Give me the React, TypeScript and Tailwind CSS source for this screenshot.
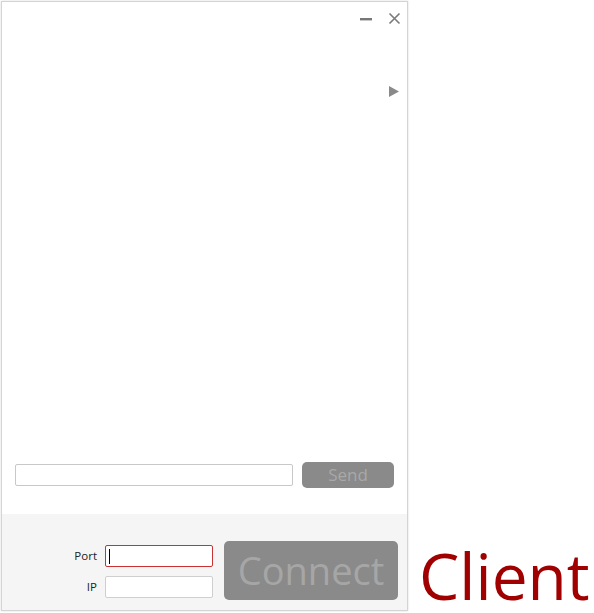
export default function App() {
  return (
    <div className="w-[594px] h-[613px] bg-white relative font-['Open_Sans',sans-serif]">
      {/* Client window */}
      <div className="absolute left-[1px] top-[1px] w-[407px] h-[610px] border border-[#d4d4d4] shadow-[0_0_2px_rgba(0,0,0,0.15)] flex flex-col bg-white">
        {/* Title bar */}
        <div className="flex justify-end items-center h-[32px] pr-[6px] gap-[16px]">
          <svg width="12" height="12" viewBox="0 0 12 12" className="mt-[1px]">
            <rect x="0" y="5" width="12" height="2.4" fill="#777" />
          </svg>
          <svg width="13" height="13" viewBox="0 0 13 13">
            <path d="M1.5 1.5 L11.5 11.5 M11.5 1.5 L1.5 11.5" stroke="#7a7a7a" strokeWidth="1.6" />
          </svg>
        </div>
        {/* Side toggle */}
        <div className="flex justify-end pr-[8px] mt-[52px]">
          <svg width="10" height="11" viewBox="0 0 10 11">
            <path d="M0 0 L10 5.5 L0 11 Z" fill="#8a8a8a" />
          </svg>
        </div>
        <div className="flex-1" />
        {/* Message row */}
        <div className="flex items-center px-[13px] gap-[9px] mb-[26px]">
          <input className="w-[278px] h-[22px] border border-[#c8c8c8] rounded-[2px] outline-none" />
          <button className="w-[92px] h-[26px] rounded-[5px] bg-[#8a8a8a] text-[#a8a8a8] text-[17px] leading-none pb-[1px]">
            Send
          </button>
        </div>
        {/* Connection panel */}
        <div className="h-[96px] bg-[#f5f5f5] flex items-end pb-[10px] pl-[19px]">
          <div className="flex flex-col gap-[9px] mb-[2px]">
            <div className="flex items-center">
              <span className="w-[84px] text-right pr-[8px] text-[11.5px] text-[#222]">Port</span>
              <div className="w-[108px] h-[22px] bg-white border border-[#c83232] rounded-[2px] flex items-center pl-[3px]">
                <div className="w-[1px] h-[15px] bg-black" />
              </div>
            </div>
            <div className="flex items-center">
              <span className="w-[84px] text-right pr-[8px] text-[11.5px] text-[#222]">IP</span>
              <div className="w-[108px] h-[22px] bg-white border border-[#cfcfcf] rounded-[2px]" />
            </div>
          </div>
          <button className="ml-[11px] w-[174px] h-[59px] rounded-[5px] bg-[#8a8a8a] text-[#a6a6a6] text-[38px] leading-none pb-[2px]">
            Connect
          </button>
        </div>
      </div>
      <div className="absolute left-[419px] top-[544px] text-[64px] leading-none text-[#a00000]">
        Client
      </div>
    </div>
  );
}
